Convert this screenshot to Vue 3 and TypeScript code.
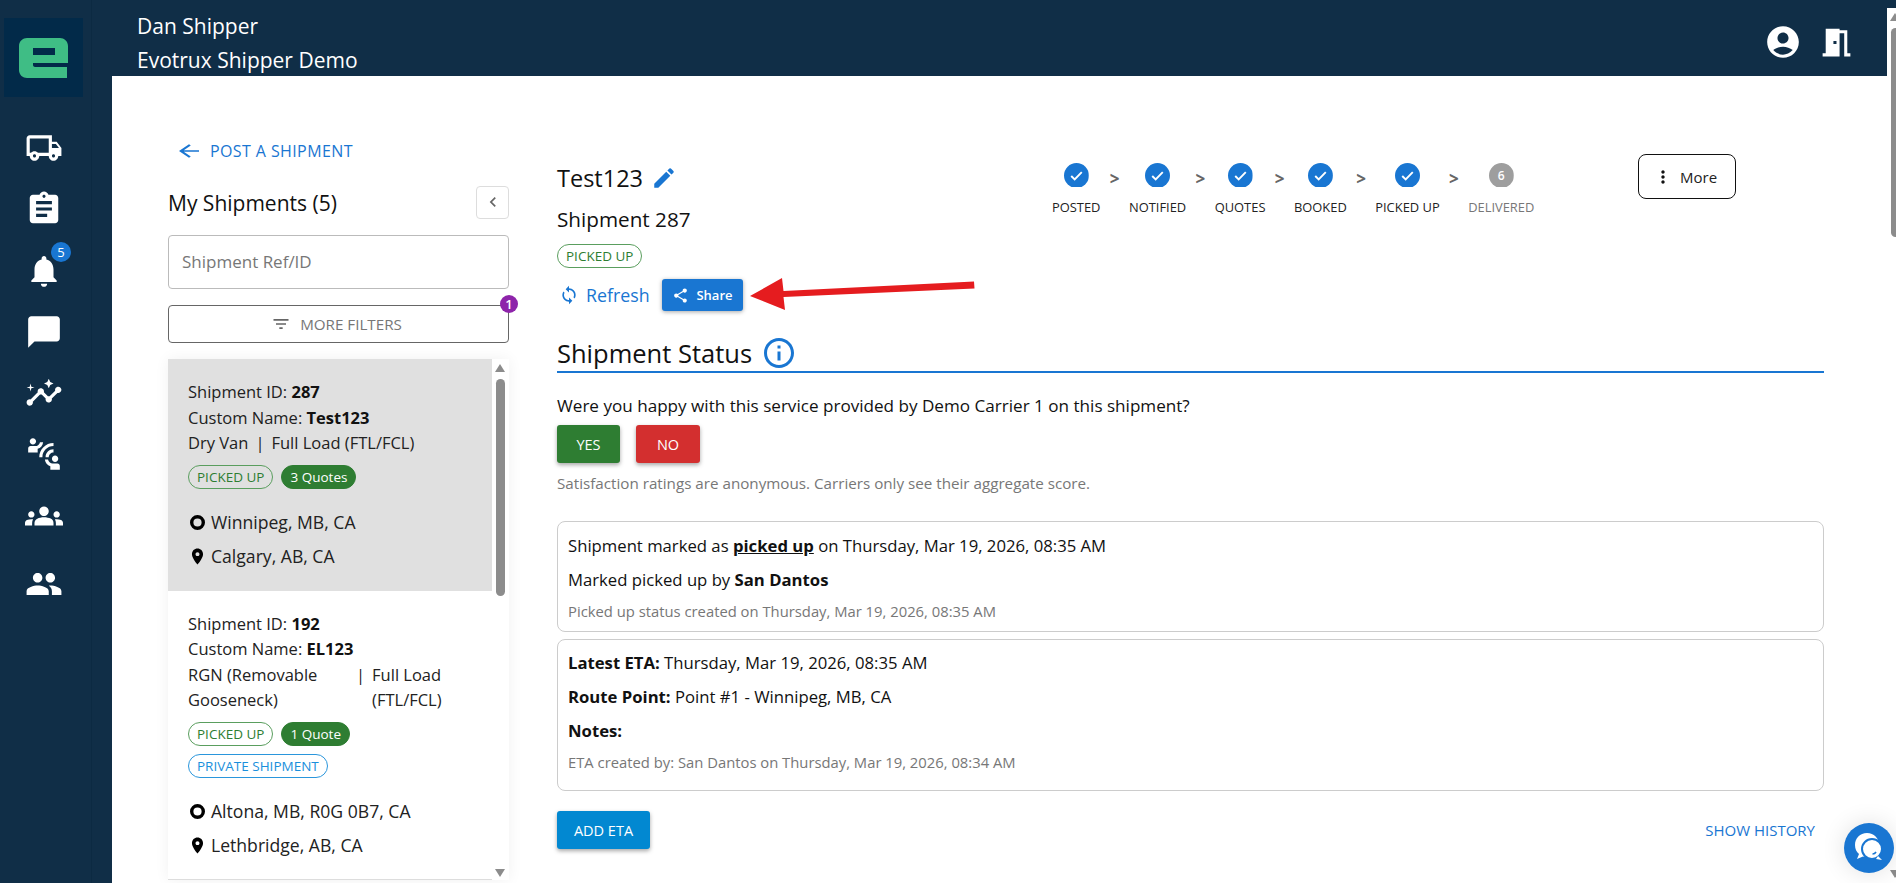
<script setup lang="ts">
const icons: Record<string, string> = {
  truck: 'M20 8h-3V4H3c-1.1 0-2 .9-2 2v11h2c0 1.66 1.34 3 3 3s3-1.34 3-3h6c0 1.66 1.34 3 3 3s3-1.34 3-3h2v-5l-3-4zm-.5 1.5 1.96 2.5H17V9.5h2.5zM6 18c-.55 0-1-.45-1-1s.45-1 1-1 1 .45 1 1-.45 1-1 1zm2.22-3c-.55-.61-1.33-1-2.22-1s-1.67.39-2.22 1H3V6h12v9H8.22zM18 18c-.55 0-1-.45-1-1s.45-1 1-1 1 .45 1 1-.45 1-1 1z',
  clipboard: 'M19 3h-4.18C14.4 1.84 13.3 1 12 1c-1.3 0-2.4.84-2.82 2H5c-1.1 0-2 .9-2 2v14c0 1.1.9 2 2 2h14c1.1 0 2-.9 2-2V5c0-1.1-.9-2-2-2zm-7 0c.55 0 1 .45 1 1s-.45 1-1 1-1-.45-1-1 .45-1 1-1zm2 14H7v-2h7v2zm3-4H7v-2h10v2zm0-4H7V7h10v2z',
  bell: 'M12 22c1.1 0 2-.9 2-2h-4c0 1.1.89 2 2 2zm6-6v-5c0-3.07-1.64-5.64-4.5-6.32V4c0-.83-.67-1.5-1.5-1.5s-1.5.67-1.5 1.5v.68C7.63 5.36 6 7.92 6 11v5l-2 2v1h16v-1l-2-2z',
  chat: 'M20 2H4c-1.1 0-2 .9-2 2v18l4-4h14c1.1 0 2-.9 2-2V4c0-1.1-.9-2-2-2z',
  insights: 'M21 8c-1.45 0-2.26 1.44-1.93 2.51l-3.55 3.56c-.3-.09-.74-.09-1.04 0l-2.55-2.55C12.27 10.45 11.46 9 10 9c-1.45 0-2.27 1.44-1.93 2.52l-4.56 4.55C2.44 15.74 1 16.55 1 18c0 1.1.9 2 2 2 1.45 0 2.26-1.44 1.93-2.51l4.55-4.56c.3.09.74.09 1.04 0l2.55 2.55C12.73 16.55 13.54 18 15 18c1.45 0 2.27-1.44 1.93-2.52l3.56-3.55c1.07.33 2.51-.48 2.51-1.93 0-1.1-.9-2-2-2zM15 9l.94-2.07L18 6l-2.06-.93L15 3l-.92 2.07L12 6l2.08.93zM3.5 11 4 9l2-.5L4 8l-.5-2L3 8l-2 .5L3 9z',
  contact: 'M11 14H9c0-4.97 4.03-9 9-9v2c-3.87 0-7 3.13-7 7zm7-3V9c-2.76 0-5 2.24-5 5h2c0-1.66 1.34-3 3-3zM7 4c0-1.11-.89-2-2-2s-2 .89-2 2 .89 2 2 2 2-.89 2-2zm4.45.5h-2C9.21 5.92 7.99 7 6.5 7h-3C2.67 7 2 7.67 2 8.5V11h6V8.74c1.86-.59 3.25-2.24 3.45-4.24zM19 17c1.11 0 2-.89 2-2s-.89-2-2-2-2 .89-2 2 .89 2 2 2zm1.5 1h-3c-1.49 0-2.71-1.08-2.95-2.5h-2c.2 2 1.59 3.65 3.45 4.24V22h6v-2.5c0-.83-.67-1.5-1.5-1.5z',
  groups: 'M12 12.75c1.63 0 3.07.39 4.24.9 1.08.48 1.76 1.56 1.76 2.73V18H6v-1.61c0-1.18.68-2.26 1.76-2.73 1.17-.52 2.61-.91 4.24-.91zM4 13c1.1 0 2-.9 2-2s-.9-2-2-2-2 .9-2 2 .9 2 2 2zm1.13 1.1c-.37-.06-.74-.1-1.13-.1-.99 0-1.93.21-2.78.58C.48 14.9 0 15.62 0 16.43V18h4.5v-1.61c0-.83.23-1.61.63-2.29zM20 13c1.1 0 2-.9 2-2s-.9-2-2-2-2 .9-2 2 .9 2 2 2zm4 3.43c0-.81-.48-1.53-1.22-1.85-.85-.37-1.79-.58-2.78-.58-.39 0-.76.04-1.13.1.4.68.63 1.46.63 2.29V18H24v-1.57zM12 6c1.66 0 3 1.34 3 3s-1.34 3-3 3-3-1.34-3-3 1.34-3 3-3z',
  people: 'M16 11c1.66 0 2.99-1.34 2.99-3S17.66 5 16 5c-1.66 0-3 1.34-3 3s1.34 3 3 3zm-8 0c1.66 0 2.99-1.34 2.99-3S9.66 5 8 5C6.34 5 5 6.34 5 8s1.34 3 3 3zm0 2c-2.33 0-7 1.17-7 3.5V19h14v-2.5c0-2.33-4.67-3.5-7-3.5zm8 0c-.29 0-.62.02-.97.05 1.16.84 1.97 1.97 1.97 3.45V19h6v-2.5c0-2.33-4.67-3.5-7-3.5z',
  account: 'M12 2C6.48 2 2 6.48 2 12s4.48 10 10 10 10-4.48 10-10S17.52 2 12 2zm0 4c1.93 0 3.5 1.57 3.5 3.5S13.93 13 12 13s-3.5-1.57-3.5-3.5S10.07 6 12 6zm0 14c-2.03 0-4.43-.82-6.14-2.88C7.55 15.8 9.68 15 12 15s4.45.8 6.14 2.12C16.43 19.18 14.03 20 12 20z',
  door: 'M14 6v15H3v-2h2V3h9v1h5v15h2v2h-4V6h-3zm-4 5v2h2v-2h-2z',
  back: 'M20 11H7.83l5.59-5.59L12 4l-8 8 8 8 1.41-1.41L7.83 13H20v-2z',
  chevron: 'M15.41 7.41 14 6l-6 6 6 6 1.41-1.41L10.83 12z',
  filter: 'M10 18h4v-2h-4v2zM3 6v2h18V6H3zm3 7h12v-2H6v2z',
  pin: 'M12 2C8.13 2 5 5.13 5 9c0 5.25 7 13 7 13s7-7.75 7-13c0-3.87-3.13-7-7-7zm0 9.5c-1.38 0-2.5-1.12-2.5-2.5s1.12-2.5 2.5-2.5 2.5 1.12 2.5 2.5-1.12 2.5-2.5 2.5z',
  edit: 'M3 17.25V21h3.75L17.81 9.94l-3.75-3.75L3 17.25zM20.71 7.04c.39-.39.39-1.02 0-1.41l-2.34-2.34a.9959.9959 0 0 0-1.41 0l-1.83 1.83 3.75 3.75 1.83-1.83z',
  sync: 'M12 4V1L8 5l4 4V6c3.31 0 6 2.69 6 6 0 1.01-.25 1.97-.7 2.8l1.46 1.46C19.54 15.03 20 13.57 20 12c0-4.42-3.58-8-8-8zm0 14c-3.31 0-6-2.69-6-6 0-1.01.25-1.97.7-2.8L5.24 7.74C4.46 8.97 4 10.43 4 12c0 4.42 3.58 8 8 8v3l4-4-4-4v3z',
  share: 'M18 16.08c-.76 0-1.44.3-1.96.77L8.91 12.7c.05-.23.09-.46.09-.7s-.04-.47-.09-.7l7.05-4.11c.54.5 1.25.81 2.04.81 1.66 0 3-1.34 3-3s-1.34-3-3-3-3 1.34-3 3c0 .24.04.47.09.7L8.04 9.81C7.5 9.31 6.79 9 6 9c-1.66 0-3 1.34-3 3s1.34 3 3 3c.79 0 1.5-.31 2.04-.81l7.12 4.16c-.05.21-.08.43-.08.65 0 1.61 1.31 2.92 2.92 2.92 1.61 0 2.92-1.31 2.92-2.92s-1.31-2.92-2.92-2.92z',
  info: 'M11 7h2v2h-2zm0 4h2v6h-2zm1-9C6.48 2 2 6.48 2 12s4.48 10 10 10 10-4.48 10-10S17.52 2 12 2zm0 18c-4.41 0-8-3.59-8-8s3.59-8 8-8 8 3.59 8 8-3.59 8-8 8z',
  more: 'M12 8c1.1 0 2-.9 2-2s-.9-2-2-2-2 .9-2 2 .9 2 2 2zm0 2c-1.1 0-2 .9-2 2s.9 2 2 2 2-.9 2-2-.9-2-2-2zm0 6c-1.1 0-2 .9-2 2s.9 2 2 2 2-.9 2-2-.9-2-2-2z',
}

const nav = [
  { icon: 'truck' },
  { icon: 'clipboard' },
  { icon: 'bell', badge: 5 },
  { icon: 'chat' },
  { icon: 'insights' },
  { icon: 'contact' },
  { icon: 'groups' },
  { icon: 'people' },
]

const steps = [
  { label: 'POSTED', done: true },
  { label: 'NOTIFIED', done: true },
  { label: 'QUOTES', done: true },
  { label: 'BOOKED', done: true },
  { label: 'PICKED UP', done: true },
  { label: 'DELIVERED', done: false },
]

const shipments = [
  {
    id: 287, name: 'Test123', type: 'Dry Van', load: 'Full Load (FTL/FCL)', quotes: '3 Quotes',
    isPrivate: false, from: 'Winnipeg, MB, CA', to: 'Calgary, AB, CA', active: true,
  },
  {
    id: 192, name: 'EL123', type: 'RGN (Removable Gooseneck)', load: 'Full Load (FTL/FCL)', quotes: '1 Quote',
    isPrivate: true, from: 'Altona, MB, R0G 0B7, CA', to: 'Lethbridge, AB, CA', active: false,
  },
]
</script>

<template>
  <div class="app">
    <aside class="sidebar">
      <div class="logo">
        <svg width="49" height="40" viewBox="0 0 49 40">
          <path fill="#3fbd85" fill-rule="evenodd" d="M8 0h33c4 0 8 3 8 8v17H14v2c0 1 1 2 2 2h32v11H8c-4 0-8-3-8-8V8c0-5 4-8 8-8zM14 10v7h22v-7z" />
        </svg>
      </div>
      <nav class="nav">
        <div v-for="item in nav" :key="item.icon" class="nav-item">
          <svg class="nav-icon" viewBox="0 0 24 24"><path :d="icons[item.icon]" /></svg>
          <span v-if="item.badge" class="nav-badge">{{ item.badge }}</span>
        </div>
      </nav>
    </aside>

    <div class="page">
      <header class="topbar">
        <div class="who">
          <div>Dan Shipper</div>
          <div>Evotrux Shipper Demo</div>
        </div>
        <div class="top-icons">
          <svg class="account" viewBox="0 0 24 24"><path :d="icons.account" /></svg>
          <svg class="door" viewBox="0 0 24 24"><path :d="icons.door" /></svg>
        </div>
      </header>

      <main class="main">
        <section class="left">
          <a class="post-link">
            <svg viewBox="0 0 24 24" preserveAspectRatio="none"><path :d="icons.back" /></svg>
            POST A SHIPMENT
          </a>
          <div class="list-head">
            <h2>My Shipments (5)</h2>
            <button class="collapse">
              <svg viewBox="0 0 24 24"><path :d="icons.chevron" /></svg>
            </button>
          </div>
          <div class="search">Shipment Ref/ID</div>
          <button class="filters">
            <svg viewBox="0 0 24 24"><path :d="icons.filter" /></svg>
            MORE FILTERS
            <span class="filters-badge">1</span>
          </button>

          <div class="list">
            <div class="cards">
              <article v-for="s in shipments" :key="s.id" class="card" :class="{ active: s.active }">
                <div>Shipment ID: <b>{{ s.id }}</b></div>
                <div>Custom Name: <b>{{ s.name }}</b></div>
                <div class="type-row">
                  <span class="type" :class="{ wide: s.isPrivate }">{{ s.type }}</span>
                  <span class="sep">|</span>
                  <span class="load">{{ s.load }}</span>
                </div>
                <div class="chips">
                  <span class="chip green">PICKED UP</span>
                  <span class="chip filled">{{ s.quotes }}</span>
                  <span v-if="s.isPrivate" class="chip blue">PRIVATE SHIPMENT</span>
                </div>
                <div class="route">
                  <svg viewBox="0 0 19 19"><circle cx="9.500" cy="9.500" r="5.800" fill="none" stroke="#000" stroke-width="3.400" /></svg>{{ s.from }}
                </div>
                <div class="route">
                  <svg viewBox="0 0 24 24"><path :d="icons.pin" /></svg>{{ s.to }}
                </div>
              </article>
            </div>
            <div class="list-scroll">
              <i class="arrow up"></i>
              <i class="thumb"></i>
              <i class="arrow down"></i>
            </div>
          </div>
        </section>

        <section class="right">
          <div class="detail-head">
            <div class="title-block">
              <div class="title">
                Test123
                <svg viewBox="0 0 24 24"><path :d="icons.edit" /></svg>
              </div>
              <div class="subtitle">Shipment 287</div>
              <span class="chip green">PICKED UP</span>
              <div class="actions">
                <a class="refresh">
                  <svg viewBox="0 0 24 24"><path :d="icons.sync" /></svg>
                  Refresh
                </a>
                <button class="share">
                  <svg viewBox="0 0 24 24"><path :d="icons.share" /></svg>
                  Share
                </button>
              </div>
            </div>

            <div class="stepper">
              <template v-for="(step, i) in steps" :key="step.label">
                <div class="step" :class="{ pending: !step.done }">
                  <span class="dot">
                    <svg v-if="step.done" viewBox="0 0 24 24">
                      <path d="M6.5 12.500l3.600 3.600 7.400-7.600" fill="none" stroke="#fff" stroke-width="2" />
                    </svg>
                    <template v-else>{{ i + 1 }}</template>
                  </span>
                  <span class="step-label">{{ step.label }}</span>
                </div>
                <span v-if="i < steps.length - 1" class="caret">&gt;</span>
              </template>
            </div>

            <button class="more">
              <svg viewBox="0 0 24 24"><path :d="icons.more" /></svg>
              More
            </button>
          </div>

          <h2 class="status-title">
            Shipment Status
            <svg viewBox="0 0 24 24"><path :d="icons.info" /></svg>
          </h2>

          <p class="question">Were you happy with this service provided by Demo Carrier 1 on this shipment?</p>
          <div class="rate">
            <button class="yes">YES</button>
            <button class="no">NO</button>
          </div>
          <p class="hint">Satisfaction ratings are anonymous. Carriers only see their aggregate score.</p>

          <div class="box first">
            <p>Shipment marked as <b><u>picked up</u></b> on Thursday, Mar 19, 2026, 08:35 AM</p>
            <p>Marked picked up by <b>San Dantos</b></p>
            <p class="meta">Picked up status created on Thursday, Mar 19, 2026, 08:35 AM</p>
          </div>
          <div class="box second">
            <p><b>Latest ETA:</b> Thursday, Mar 19, 2026, 08:35 AM</p>
            <p><b>Route Point:</b> Point #1 - Winnipeg, MB, CA</p>
            <p><b>Notes:</b></p>
            <p class="meta">ETA created by: San Dantos on Thursday, Mar 19, 2026, 08:34 AM</p>
          </div>

          <div class="foot">
            <button class="add-eta">ADD ETA</button>
            <a class="history">SHOW HISTORY</a>
          </div>
        </section>
      </main>
    </div>

    <!-- red annotation arrow drawn over the screenshot -->
    <svg class="annotation" width="240" height="40" viewBox="0 0 240 40">
      <path fill="#e51c1f" d="M0 18L32 0l1.500 13L224 3.500l.5 7L33.500 19 35 32z" />
    </svg>

    <div class="page-scroll">
      <i class="page-arrow up"></i>
      <i class="page-thumb"></i>
      <i class="page-arrow down"></i>
    </div>

    <div class="chat-fab">
      <svg width="34" height="34" viewBox="0 0 34 34">
        <path fill="#fff" d="M15 2c-7 0-12 5-12 12 0 4 1.500 7 4 9l-2 5 6-2.500c1 .3 2 .5 3.500.5C21 26 27 20.500 27 14 27 7 22 2 15 2z" />
        <circle cx="20" cy="18" r="10" fill="#fff" stroke="#1976d2" stroke-width="2" />
        <path fill="#fff" d="M26 25l4 4-6-1z" />
        <path d="M24 21c-.8 1.500-2 2-3.500 2" fill="none" stroke="#1976d2" stroke-width="1.600" />
      </svg>
    </div>
  </div>
</template>

<style>
html,
body {
  margin: 0;
  height: 100%;
  overflow: hidden;
  background: #fff;
}
</style>

<style scoped>
.app {
  position: relative;
  display: flex;
  height: 883px;
  overflow: hidden;
  font-family: "Open Sans", "Noto Sans", sans-serif;
  color: #111;
  background: #fff;
}

button {
  font-family: inherit;
  cursor: pointer;
}

p,
h2 {
  margin: 0;
  font-weight: 400;
}

b {
  font-weight: 700;
}

/* sidebar */
.sidebar {
  position: relative;
  flex: 0 0 112px;
  background: #102e47;
  padding-top: 18px;
  box-sizing: border-box;
}

.sidebar::after {
  content: "";
  position: absolute;
  left: 91px;
  top: 0;
  bottom: 0;
  width: 1px;
  background: #0c2a42;
}

.logo {
  display: flex;
  align-items: center;
  justify-content: center;
  width: 79px;
  height: 79px;
  margin-left: 4px;
  background: #022a49;
}

.nav {
  margin-top: 32px;
  display: flex;
  flex-direction: column;
  gap: 23.300px;
}

.nav-item {
  position: relative;
  width: 87px;
  height: 38px;
  display: flex;
  align-items: center;
  justify-content: center;
}

.nav-item:last-child {
  margin-top: 7px;
}

.nav-icon {
  width: 38px;
  height: 38px;
  fill: #fff;
}

.nav-badge {
  position: absolute;
  left: 51px;
  top: -10px;
  width: 20px;
  height: 20px;
  border-radius: 50%;
  background: #1976d2;
  color: #fff;
  font-size: 13px;
  line-height: 20px;
  text-align: center;
}

/* top bar */
.page {
  flex: 1;
  display: flex;
  flex-direction: column;
  min-width: 0;
}

.topbar {
  display: flex;
  align-items: flex-start;
  justify-content: space-between;
  height: 76px;
  background: #102e47;
  color: #fff;
}

.who {
  margin-left: 25px;
  padding-top: 9px;
  font-size: 21px;
  line-height: 34px;
}

.top-icons {
  display: flex;
  align-items: center;
  gap: 16px;
  padding: 23px 41px 0 0;
}

.account {
  width: 38px;
  height: 38px;
  fill: #fff;
}

.door {
  width: 37px;
  height: 37px;
  fill: #fff;
}

/* layout */
.main {
  flex: 1;
  display: flex;
  gap: 48px;
  padding-left: 56px;
  min-height: 0;
}

.left {
  width: 341px;
  padding-top: 57px;
  flex: none;
}

.post-link {
  display: flex;
  align-items: center;
  gap: 6px;
  height: 36px;
  padding-left: 6px;
  color: #1976d2;
  font-size: 16px;
  letter-spacing: 0.400px;
}

.post-link svg {
  width: 30px;
  height: 20px;
  fill: #1976d2;
}

.list-head {
  display: flex;
  align-items: center;
  justify-content: space-between;
  margin-top: 17px;
  height: 32px;
}

.list-head h2 {
  padding-top: 2px;
  font-size: 21px;
}

.collapse {
  width: 33px;
  height: 33px;
  padding: 0;
  display: flex;
  align-items: center;
  justify-content: center;
  background: #fff;
  border: 1px solid #ddd;
  border-radius: 4px;
}

.collapse svg {
  width: 20px;
  height: 20px;
  fill: #666;
}

.search {
  margin-top: 17px;
  height: 54px;
  box-sizing: border-box;
  padding-left: 13px;
  border: 1px solid #bbb;
  border-radius: 4px;
  line-height: 52px;
  font-size: 17px;
  color: #777;
}

.filters {
  position: relative;
  display: flex;
  align-items: center;
  justify-content: center;
  gap: 9px;
  width: 100%;
  height: 38px;
  margin-top: 16px;
  padding: 0 4px 0 0;
  background: #fff;
  border: 1px solid #666;
  border-radius: 4px;
  font-size: 15.200px;
  color: #777;
}

.filters svg {
  width: 20px;
  height: 20px;
  fill: #666;
}

.filters-badge {
  position: absolute;
  right: -10px;
  top: -11px;
  width: 18px;
  height: 18px;
  border-radius: 50%;
  background: #8e24aa;
  color: #fff;
  font-size: 13px;
  font-weight: 600;
  line-height: 18px;
}

/* list */
.list {
  display: flex;
  height: 521px;
  margin-top: 16px;
  overflow: hidden;
  box-shadow: 0 0 14px rgba(0, 0, 0, 0.06);
}

.cards {
  width: 324px;
  flex: none;
  overflow: hidden;
  border-bottom: 1px solid #ddd;
  box-sizing: border-box;
}

.card {
  padding: 20px 12px 17px 20px;
  font-size: 16.500px;
  line-height: 25.500px;
  color: #222;
}

.card + .card {
  padding-top: 20px;
}

.card.active {
  background: #e0e0e0;
}

.card b {
  color: #111;
}

.type-row {
  display: flex;
  gap: 7px;
}

.type {
  flex: 0 0 auto;
}

.type.wide {
  width: 161px;
}

.sep {
  flex: none;
}

.chips {
  display: flex;
  flex-wrap: wrap;
  gap: 8px;
  margin: 9px 0 17px;
}

.chip {
  display: inline-block;
  height: 24px;
  box-sizing: border-box;
  padding: 0 8px;
  border: 1px solid #5a9e5e;
  border-radius: 12px;
  font-size: 13.500px;
  line-height: 22px;
  white-space: nowrap;
  color: #2e7d32;
}

.chip.filled {
  background: #2e7d32;
  border-color: #2e7d32;
  color: #fff;
}

.chip.blue {
  border-color: #2a96dc;
  color: #1a8fdc;
}

.route {
  display: flex;
  align-items: center;
  gap: 4px;
  height: 34px;
  font-size: 17.600px;
}

.route svg {
  width: 19px;
  height: 19px;
  flex: none;
  fill: #000;
}

.list-scroll {
  position: relative;
  flex: 1;
}

.list-scroll .thumb {
  position: absolute;
  left: 4px;
  top: 20px;
  width: 9px;
  height: 217px;
  border-radius: 5px;
  background: #8c8c8c;
}

.arrow {
  position: absolute;
  left: 3px;
  border-left: 5.500px solid transparent;
  border-right: 5.500px solid transparent;
}

.arrow.up {
  top: 5px;
  border-bottom: 8px solid #8c8c8c;
}

.arrow.down {
  bottom: 3px;
  border-top: 8px solid #8c8c8c;
}

/* detail */
.right {
  flex: none;
  width: 1267px;
  padding-top: 78px;
}

.detail-head {
  display: flex;
  align-items: flex-start;
}

.title-block {
  flex: 0 0 495px;
  padding-top: 8px;
}

.title {
  display: flex;
  align-items: center;
  gap: 8px;
  height: 32px;
  font-size: 23.500px;
}

.title svg {
  width: 26px;
  height: 26px;
  fill: #1976d2;
}

.subtitle {
  margin: 11px 0 11px;
  font-size: 20.700px;
  line-height: 28px;
}

.actions {
  display: flex;
  align-items: center;
  margin-top: 11px;
  height: 32px;
}

.refresh {
  display: flex;
  align-items: center;
  gap: 7px;
  width: 105px;
  padding-left: 2px;
  box-sizing: border-box;
  font-size: 17.800px;
  color: #1976d2;
}

.refresh svg {
  width: 20px;
  height: 20px;
  fill: #1976d2;
}

.share {
  display: flex;
  align-items: center;
  justify-content: center;
  gap: 7px;
  width: 81px;
  height: 32px;
  padding: 0;
  border: 0;
  border-radius: 3px;
  background: #1976d2;
  color: #fff;
  font-size: 13px;
  font-weight: 600;
  box-shadow: 0 1px 4px rgba(0, 0, 0, 0.35);
}

.share svg {
  width: 17px;
  height: 17px;
  fill: #fff;
}

/* stepper */
.stepper {
  flex: 0 0 485px;
  display: flex;
  align-items: flex-start;
  padding-top: 9px;
}

.step {
  display: flex;
  flex-direction: column;
  align-items: center;
  gap: 12px;
}

.dot {
  display: flex;
  align-items: center;
  justify-content: center;
  width: 25px;
  height: 25px;
  margin-bottom: -1px;
  border-radius: 50%;
  clip-path: inset(0 0 1px 0);
  background: #1976d2;
  color: #fff;
  font-size: 12px;
  font-weight: 600;
}

.dot svg {
  width: 23px;
  height: 23px;
}

.step.pending .dot {
  background: #9e9e9e;
}

.step-label {
  font-size: 12.900px;
  line-height: 16px;
  white-space: nowrap;
  color: #222;
}

.step.pending .step-label {
  color: #777;
}

.caret {
  width: 28.500px;
  text-align: center;
  margin-top: 4px;
  font-size: 17px;
  font-weight: 700;
  color: #666;
}

.more {
  display: flex;
  align-items: center;
  gap: 7px;
  width: 98px;
  height: 45px;
  margin-left: 101px;
  padding: 0 0 0 14px;
  background: #fff;
  border: 1px solid #111;
  border-radius: 8px;
  font-size: 15px;
  color: #222;
}

.more svg {
  width: 20px;
  height: 20px;
  fill: #111;
}

/* status */
.status-title {
  display: flex;
  align-items: center;
  gap: 9px;
  height: 37px;
  margin-top: 23px;
  border-bottom: 2px solid #1976d2;
  font-size: 25.500px;
}

.status-title svg {
  width: 36px;
  height: 36px;
  fill: #1976d2;
}

.question {
  margin-top: 21px;
  font-size: 17.100px;
  line-height: 24px;
}

.rate {
  display: flex;
  gap: 16px;
  margin-top: 7px;
}

.rate button,
.add-eta {
  height: 38px;
  padding: 0;
  border: 0;
  border-radius: 3px;
  color: #fff;
  font-size: 14.500px;
  font-weight: 500;
  box-shadow: 0 2px 4px rgba(0, 0, 0, 0.35);
}

.yes {
  width: 63px;
  background: #2e7d32;
}

.no {
  width: 64px;
  background: #d32f2f;
}

.hint {
  margin-top: 10px;
  font-size: 15.200px;
  line-height: 20px;
  color: #777;
}

.box {
  box-sizing: border-box;
  padding-left: 10px;
  border: 1px solid #ccc;
  border-radius: 8px;
  font-size: 16.700px;
}

.box p {
  line-height: 34px;
  color: #111;
}

.box p.meta {
  font-size: 14.800px;
  line-height: 28px;
  color: #777;
}

.first {
  height: 111px;
  margin-top: 28px;
  padding-top: 7px;
}

.second {
  height: 152px;
  margin-top: 7px;
  padding-top: 6px;
}

.foot {
  display: flex;
  align-items: center;
  justify-content: space-between;
  margin-top: 20px;
}

.add-eta {
  width: 93px;
  background: #0288d1;
}

.history {
  margin-right: 9px;
  font-size: 15px;
  color: #1976d2;
}

/* overlays */
.annotation {
  position: absolute;
  left: 750px;
  top: 278px;
}

.page-scroll {
  position: absolute;
  right: 0;
  top: 8px;
  bottom: 0;
  width: 9px;
  background: #fff;
}

.page-thumb {
  position: absolute;
  left: 4px;
  top: 20px;
  width: 9px;
  height: 209px;
  border-radius: 5px;
  background: #8c8c8c;
}

.page-arrow {
  position: absolute;
  left: 3px;
  border-left: 5.500px solid transparent;
  border-right: 5.500px solid transparent;
}

.page-arrow.up {
  top: 5px;
  border-bottom: 8px solid #8c8c8c;
}

.page-arrow.down {
  bottom: 5px;
  border-top: 8px solid #8c8c8c;
}

.chat-fab {
  position: absolute;
  left: 1844px;
  top: 823px;
  display: flex;
  align-items: center;
  justify-content: center;
  width: 50px;
  height: 50px;
  border-radius: 50%;
  background: #1976d2;
  box-shadow: 0 0 24px rgba(0, 0, 0, 0.12);
}
</style>
